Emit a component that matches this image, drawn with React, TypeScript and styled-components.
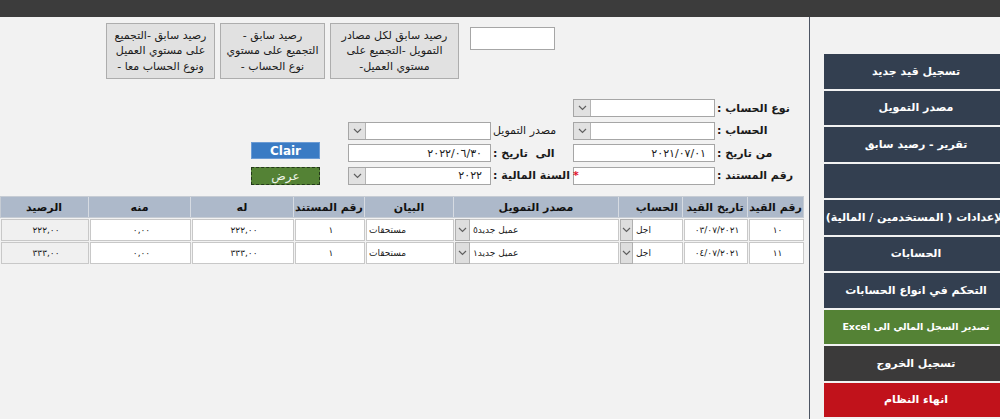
import styled, { createGlobalStyle } from 'styled-components';

const GlobalStyle = createGlobalStyle`
  html, body {
    margin: 0;
    padding: 0;
  }
  body {
    background: #f2f2f2;
    font-family: "DejaVu Sans", "Noto Sans", sans-serif;
    overflow: hidden;
  }
`;

type Tone = 'navy' | 'green' | 'dark' | 'red';

const toneColors: Record<Tone, string> = {
  navy: '#333f50',
  green: '#548235',
  dark: '#3b3a3a',
  red: '#c1121b',
};

const menu: { label: string; tone: Tone; fs?: number }[] = [
  { label: 'تسجيل قيد جديد', tone: 'navy' },
  { label: 'مصدر التمويل', tone: 'navy' },
  { label: 'تقرير - رصيد سابق', tone: 'navy' },
  { label: '', tone: 'navy' },
  { label: 'الإعدادات ( المستخدمين / المالية)', tone: 'navy' },
  { label: 'الحسابات', tone: 'navy' },
  { label: 'التحكم في انواع الحسابات', tone: 'navy' },
  { label: 'تصدير السجل المالي الى Excel', tone: 'green', fs: 9.5 },
  { label: 'تسجيل الخروج', tone: 'dark' },
  { label: 'انهاء النظام', tone: 'red' },
];

const reports = [
  { w: 129, lines: ['رصيد سابق لكل مصادر', 'التمويل -التجميع على', 'مستوي العميل-'] },
  { w: 105, lines: ['رصيد سابق -', 'التجميع على مستوي', 'نوع الحساب -'] },
  { w: 109, lines: ['رصيد سابق -التجميع', 'على مستوي العميل', 'ونوع الحساب معا -'] },
];

const columns = [
  { title: 'رقم القيد' },
  { title: 'تاريخ القيد' },
  { title: 'الحساب', align: 'right' },
  { title: 'مصدر التمويل' },
  { title: 'البيان' },
  { title: 'رقم المستند' },
  { title: 'له' },
  { title: 'منه' },
  { title: 'الرصيد' },
];

const rows = [
  { id: '١٠', date: '٠٣/٠٧/٢٠٢١', account: 'اجل', source: 'عميل جديد٥', note: 'مستحقات', doc: '١', credit: '٢٢٢,٠٠', debit: '٠,٠٠', balance: '٢٢٢,٠٠' },
  { id: '١١', date: '٠٤/٠٧/٢٠٢١', account: 'اجل', source: 'عميل جديد١', note: 'مستحقات', doc: '١', credit: '٣٣٣,٠٠', debit: '٠,٠٠', balance: '٣٣٣,٠٠' },
];

const Chevron = () => (
  <svg width="9" height="6" viewBox="0 0 9 6">
    <polyline points="1,1 4.5,4.5 8,1" fill="none" stroke="#606060" strokeWidth="1.2" />
  </svg>
);

const Combo = ({ value }: { value?: string }) => (
  <Field>
    <FieldText>{value}</FieldText>
    <DropBtn>
      <Chevron />
    </DropBtn>
  </Field>
);

const App = () => {
  return (
    <>
      <GlobalStyle />
      <Page>
        <TopBar />
        <Main>
          <Content dir="rtl">
            <TopRow>
              <SearchBox />
              {reports.map((r) => (
                <ReportButton key={r.w} $w={r.w}>
                  {r.lines.map((l) => (
                    <ReportLine key={l}>{l}</ReportLine>
                  ))}
                </ReportButton>
              ))}
            </TopRow>

            <FormGrid>
              <Label>نوع الحساب :</Label>
              <Combo />
              <Spacer $span={3} />

              <Label>الحساب :</Label>
              <Combo />
              <Label $light>مصدر التمويل</Label>
              <Combo />
              <Spacer />

              <Label>من تاريخ :</Label>
              <Field>
                <FieldText>٢٠٢١/٠٧/٠١</FieldText>
              </Field>
              <Label>الى&nbsp; تاريخ :</Label>
              <Field>
                <FieldText>٢٠٢٢/٠٦/٣٠</FieldText>
              </Field>
              <ActionStack>
                <ClairButton>Clair</ClairButton>
                <ShowButton>عرض</ShowButton>
              </ActionStack>

              <Label>رقم المستند :</Label>
              <Field />
              <Label>
                <Star>*</Star>السنة المالية :
              </Label>
              <Combo value="٢٠٢٢" />
            </FormGrid>

            <Grid>
              <HeadRow>
                {columns.map((c) => (
                  <HeadCell key={c.title} $align={c.align}>
                    {c.title}
                  </HeadCell>
                ))}
              </HeadRow>
              {rows.map((r) => (
                <BodyRow key={r.id}>
                  <Cell>{r.id}</Cell>
                  <Cell>{r.date}</Cell>
                  <ComboCell>
                    <CellDrop>
                      <Chevron />
                    </CellDrop>
                    <span>{r.account}</span>
                  </ComboCell>
                  <ComboCell>
                    <CellDrop $w={15}>
                      <Chevron />
                    </CellDrop>
                    <span>{r.source}</span>
                  </ComboCell>
                  <Cell $align="left">{r.note}</Cell>
                  <Cell>{r.doc}</Cell>
                  <Cell>{r.credit}</Cell>
                  <Cell>{r.debit}</Cell>
                  <Cell $muted>{r.balance}</Cell>
                </BodyRow>
              ))}
            </Grid>
          </Content>

          <Divider />

          <Sidebar dir="rtl">
            {menu.map((m, i) => (
              <SideButton key={i} $tone={m.tone} $fs={m.fs}>
                {m.label}
              </SideButton>
            ))}
          </Sidebar>
        </Main>
      </Page>
    </>
  );
};

export default App;

const Page = styled.div`
  width: 1000px;
  height: 100vh;
  display: flex;
  flex-direction: column;
  overflow: hidden;
`;

const TopBar = styled.div`
  height: 17px;
  flex-shrink: 0;
  background: #3c3c3c;
`;

const Main = styled.div`
  flex: 1;
  display: flex;
  min-height: 0;
`;

const Content = styled.div`
  width: 809px;
  flex-shrink: 0;
  padding-top: 6px;
  box-sizing: border-box;
`;

const Divider = styled.div`
  width: 1px;
  flex-shrink: 0;
  background: #4d5563;
`;

const Sidebar = styled.nav`
  width: 184px;
  flex-shrink: 0;
  margin-left: 14px;
  padding-top: 37px;
  display: flex;
  flex-direction: column;
  gap: 2px;
`;

const SideButton = styled.div<{ $tone: Tone; $fs?: number }>`
  height: 34.5px;
  display: flex;
  align-items: center;
  justify-content: center;
  white-space: nowrap;
  background: ${(p) => toneColors[p.$tone]};
  color: #ffffff;
  font-size: ${(p) => p.$fs ?? 11}px;
  font-weight: bold;
`;

const TopRow = styled.div`
  display: flex;
  align-items: flex-start;
  gap: 5px;
  padding-right: 254px;
`;

const SearchBox = styled.div`
  width: 85px;
  height: 23px;
  margin-top: 4px;
  margin-left: 6px;
  box-sizing: border-box;
  background: #ffffff;
  border: 1px solid #a6a6a6;
`;

const ReportButton = styled.div<{ $w: number }>`
  width: ${(p) => p.$w}px;
  height: 56px;
  box-sizing: border-box;
  display: flex;
  flex-direction: column;
  align-items: center;
  justify-content: center;
  background: #e1e1e1;
  border: 1px solid #adadad;
  color: #1a1a1a;
  font-size: 11px;
  line-height: 15.5px;
`;

const ReportLine = styled.div`
  white-space: nowrap;
`;

const FormGrid = styled.div`
  margin-top: 20px;
  padding-right: 19px;
  display: grid;
  grid-template-columns: 75px 142px 82px 143px 97px;
  grid-auto-rows: 18px;
  row-gap: 4.5px;
`;

const Spacer = styled.div<{ $span?: number }>`
  grid-column: span ${(p) => p.$span ?? 1};
`;

const Label = styled.div<{ $light?: boolean }>`
  display: flex;
  align-items: center;
  justify-content: flex-end;
  padding: 0 2px;
  white-space: nowrap;
  font-size: 11px;
  font-weight: ${(p) => (p.$light ? 'normal' : 'bold')};
  color: #1a1a1a;
`;

const Star = styled.span`
  color: #e0102a;
  margin-left: 3px;
`;

const Field = styled.div`
  display: flex;
  align-items: stretch;
  box-sizing: border-box;
  height: 18px;
  background: #ffffff;
  border: 1px solid #a6a6a6;
`;

const FieldText = styled.div`
  flex: 1;
  display: flex;
  align-items: center;
  padding-right: 8px;
  font-size: 11px;
  color: #1a1a1a;
`;

const DropBtn = styled.div`
  width: 16px;
  display: flex;
  align-items: center;
  justify-content: center;
  background: #e1e1e1;
  border-right: 1px solid #b4b4b4;
`;

const ActionStack = styled.div`
  grid-row: 3 / span 2;
  grid-column: 5;
  justify-self: end;
  margin-top: -2px;
  display: flex;
  flex-direction: column;
  gap: 8px;
`;

const ClairButton = styled.div`
  width: 69px;
  height: 19px;
  box-sizing: border-box;
  display: flex;
  align-items: center;
  justify-content: center;
  background: #3a7bc4;
  border: 1px solid #6b9bd4;
  color: #ffffff;
  font-size: 12px;
  font-weight: bold;
`;

const ShowButton = styled(ClairButton)`
  background: #548235;
  border: 1px dashed #23381a;
  color: #eef4e8;
  font-weight: normal;
`;

const Grid = styled.div`
  margin-top: 11.5px;
  margin-right: 5px;
  width: 804px;
`;

const cols = '56px 65px 64px 165px 89px 71px 103px 102px 89px';

const HeadRow = styled.div`
  display: grid;
  grid-template-columns: ${cols};
  height: 22px;
  background: #adb9ca;
  border: 1px solid #c6ccd4;
  box-sizing: border-box;
`;

const HeadCell = styled.div<{ $align?: string }>`
  display: flex;
  align-items: center;
  justify-content: ${(p) => (p.$align === 'right' ? 'flex-start' : 'center')};
  padding-right: ${(p) => (p.$align === 'right' ? '4px' : '0')};
  border-left: 1px solid #d6dbe2;
  font-size: 11px;
  font-weight: bold;
  color: #111111;
  white-space: nowrap;
`;

const BodyRow = styled.div`
  display: grid;
  grid-template-columns: ${cols};
  height: 22px;
  margin-top: 1px;
`;

const Cell = styled.div<{ $align?: string; $muted?: boolean }>`
  display: flex;
  align-items: center;
  justify-content: ${(p) => (p.$align === 'left' ? 'flex-end' : 'center')};
  padding-left: 2px;
  box-sizing: border-box;
  background: ${(p) => (p.$muted ? '#f0f0f0' : '#ffffff')};
  border: 1px solid #c8c8c8;
  margin-left: 1px;
  font-size: 9px;
  color: #1a1a1a;
  white-space: nowrap;
`;

const ComboCell = styled(Cell)`
  padding-left: 0;
  gap: 3px;
  flex-direction: row-reverse;
  justify-content: flex-start;
`;

const CellDrop = styled.div<{ $w?: number }>`
  width: ${(p) => p.$w ?? 13}px;
  align-self: stretch;
  display: flex;
  align-items: center;
  justify-content: center;
  background: #dedede;
  border: 1px solid #b0b0b0;
  box-sizing: border-box;
  margin: -1px 0 -1px -1px;
`;
